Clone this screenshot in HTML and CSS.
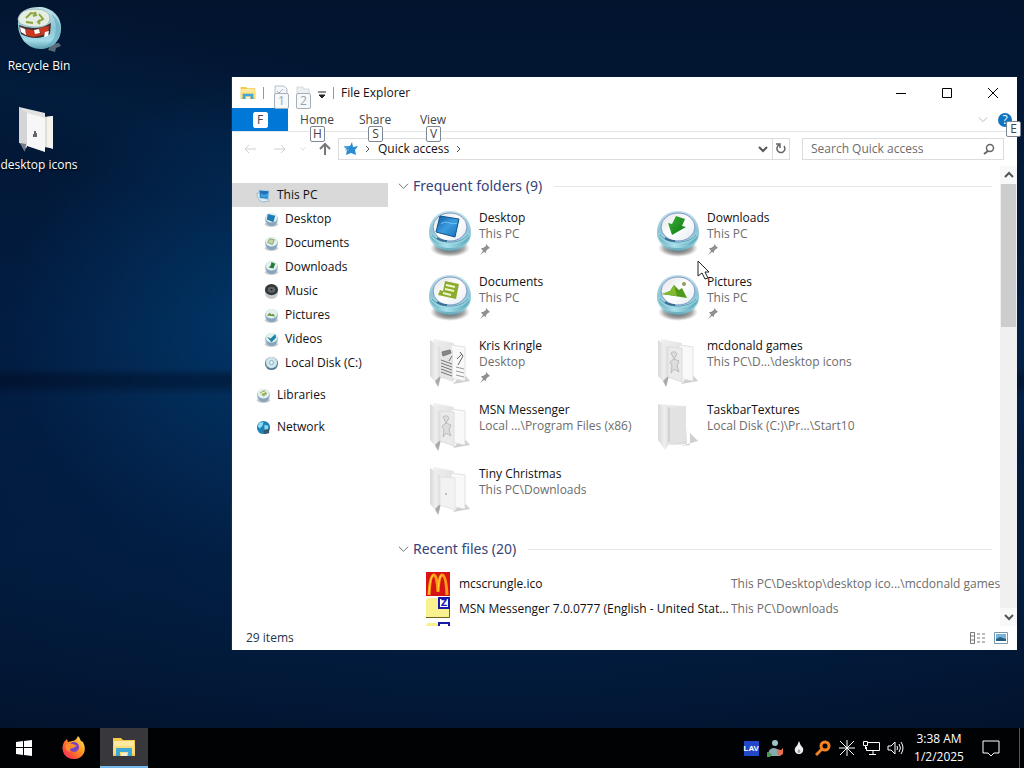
FILE: index.html
```html
<!DOCTYPE html>
<html lang="en">
<head>
<meta charset="utf-8">
<title>File Explorer</title>
<link rel="stylesheet" href="styles.css">
</head>
<body>
<svg class="defs" aria-hidden="true">
  <defs>
    <linearGradient id="orb-body" x1="0" y1="0" x2="0" y2="1"><stop offset="0" stop-color="#c3e4ec"/><stop offset=".5" stop-color="#8cc6d4"/><stop offset=".8" stop-color="#a2dbe6"/><stop offset="1" stop-color="#5f9fb2"/></linearGradient>
    <linearGradient id="orb-band" x1="0" y1="0" x2="1" y2="0"><stop offset="0" stop-color="#69adbf"/><stop offset=".4" stop-color="#a9e0ea"/><stop offset="1" stop-color="#5ba7bc"/></linearGradient>
    <linearGradient id="orb-top" x1="0" y1="0" x2="1" y2="1"><stop offset="0" stop-color="#dfe3e4"/><stop offset=".5" stop-color="#fff"/><stop offset="1" stop-color="#e3e9f2"/></linearGradient>
    <radialGradient id="orb-shadow"><stop offset="0" stop-color="#222" stop-opacity=".9"/><stop offset=".7" stop-color="#555" stop-opacity=".5"/><stop offset="1" stop-color="#888" stop-opacity="0"/></radialGradient>
    <linearGradient id="blue" x1="0" y1="0" x2="1" y2="1"><stop offset="0" stop-color="#125a9e"/><stop offset=".5" stop-color="#3a9cdf"/><stop offset="1" stop-color="#1b6fb5"/></linearGradient>
    <linearGradient id="green" x1="0" y1="0" x2="1" y2="1"><stop offset="0" stop-color="#3fae36"/><stop offset="1" stop-color="#0b7a15"/></linearGradient>
    <linearGradient id="flap" x1="0" y1="0" x2="1" y2="0"><stop offset="0" stop-color="#d9d9d9"/><stop offset=".6" stop-color="#efefef"/><stop offset="1" stop-color="#dcdcdc"/></linearGradient>
    <linearGradient id="back" x1="0" y1="0" x2="1" y2="1"><stop offset="0" stop-color="#f0f0f0"/><stop offset="1" stop-color="#dadada"/></linearGradient>
    <linearGradient id="fox" x1="1" y1="0" x2="0" y2="1"><stop offset="0" stop-color="#fff36b"/><stop offset=".4" stop-color="#ff9a1f"/><stop offset=".75" stop-color="#ff4a3d"/><stop offset="1" stop-color="#e52a7d"/></linearGradient>
  </defs>
  <symbol id="orb" viewBox="0 0 42 48">
    <ellipse cx="21" cy="38" rx="20" ry="9" fill="url(#orb-shadow)"/>
    <path d="M0 23C0 9 9 1 21 1s21 8 21 22c0 11-10 18-21 18S0 34 0 23z" fill="url(#orb-body)"/>
    <path d="M1 25c6 11 31 13 40 0-1 9-10 13-20 13S3 34 1 25z" fill="url(#orb-band)"/>
    <path d="M3 25c7 9 28 10 36 0" fill="none" stroke="#5a9fb3"/>
    <ellipse cx="21" cy="17" rx="17" ry="14" fill="url(#orb-top)" stroke="#8094c4"/>
    <path d="M8 28q4 3 10 3" fill="none" stroke="#3a6e94" stroke-width="2"/>
  </symbol>
  <symbol id="orb-desktop" viewBox="0 0 42 48"><use href="#orb"/><path d="M11 6l19 3-4 18-19-5z" fill="url(#blue)" stroke="#0e538e"/><path d="M12 14c6-5 10 2 16-1" fill="none" stroke="#73c6f5"/></symbol>
  <symbol id="orb-down" viewBox="0 0 42 48"><use href="#orb"/><path d="M19 6l9 3-3 7 4 1-14 8-4-12 4 1z" fill="url(#green)"/></symbol>
  <symbol id="orb-doc" viewBox="0 0 42 48"><use href="#orb"/><path d="M16 7l14 3-3 15-18-4 2-5 3 1z" fill="#8dac2d"/><path d="M17 11l9 2M16 15l9 2M14 19l8 2" stroke="#eff5cf" stroke-width="2"/></symbol>
  <symbol id="orb-pic" viewBox="0 0 42 48"><use href="#orb"/><path d="M5 20l8-3 4-6 5 5 3-2 5 10z" fill="#4f9a1c"/><path d="M5 20l8-3 4-6 3 11z" fill="#83b92f"/><circle cx="27" cy="10" r="2" fill="#8e9a62"/></symbol>

  <symbol id="folder" viewBox="0 0 42 52">
    <path d="M24 46l17-3-7-8z" fill="#bbb" opacity=".7"/>
    <path d="M4 1l21 4v38L4 38z" fill="url(#back)"/>
    <path d="M22 7l14 2v34l-14-3z" fill="#f9f9f9" stroke="#e2e2e2"/>
    <path d="M1 2l10 7v31l-1 8-9-10z" fill="url(#flap)"/>
    <path d="M10 39l2-1-3 11-3-6z" fill="#aaa"/>
  </symbol>
  <symbol id="folder-face" viewBox="0 0 42 52"><use href="#folder"/><path d="M11 9l14 1v34l-14-5z" fill="#eaeaea" stroke="#ddd"/><path d="M14 15q4-3 6 1l-3 5 5 2-2 5 2 6-5-3-3 4 1-7-2-4 4-3z" fill="#ddd" stroke="#bbb"/></symbol>
  <symbol id="folder-kris" viewBox="0 0 42 52"><use href="#folder"/><path d="M11 11l13 1v32l-13-5z" fill="#e4e4e4"/><path d="M13 14l8-2 1 3-8 3zM12 22l11 4M12 25l11 4M12 28l11 4M12 31l11 4M12 34l11 4M20 23l3-5" fill="#888" stroke="#777"/><path d="M31 14l3 4-5 9M28 21l5-5" fill="none" stroke="#666"/><path d="M27 29l8 2M27 33l8 2M27 37l8 2" fill="none" stroke="#999"/></symbol>
  <symbol id="folder-tiny" viewBox="0 0 42 52"><use href="#folder"/><path d="M11 11l15 1v32l-15-5z" fill="#f2f2f2" stroke="#e4e4e4"/><circle cx="17" cy="28" r="1" fill="#aaa"/></symbol>
  <symbol id="folder-flat" viewBox="0 0 42 52">
    <path d="M24 44l17-5-8-8v12z" fill="#bbb" opacity=".7"/>
    <path d="M1 2l27 2 2 38-17 1z" fill="url(#back)"/><path d="M12 6l17-2v35l-18 3z" fill="#e2e2e2"/><path d="M1 2l11 4v36l-4 6-7-10z" fill="url(#flap)"/><path d="M12 5v35" stroke="#c4c4c4"/>
  </symbol>

  <symbol id="pin" viewBox="0 0 12 12"><path d="M7 1l4 4-2 1-2 2v2L5 9l-4 3 3-4-2-3h2l3-2z" fill="#8c9093"/></symbol>
  <symbol id="s-orb" viewBox="0 0 16 16"><ellipse cx="8" cy="13" rx="7" ry="3" fill="#777" opacity=".4"/><circle cx="8" cy="8" r="7" fill="#a8ccd8"/><path d="M2 9q6 5 12 0-1 6-6 6T2 9z" fill="#8aa3bd"/><ellipse cx="8" cy="6" rx="6" ry="5" fill="#e6f0ee"/></symbol>
  <symbol id="s-desktop" viewBox="0 0 16 16"><use href="#s-orb"/><path d="M4 2l8 2-2 7-7-3z" fill="#1e7bb5"/></symbol>
  <symbol id="s-pc" viewBox="0 0 16 16"><path d="M1 5q0 8 6 10l7-1-2-4z" fill="#dcecf2" stroke="#9cb9c9"/><path d="M3 2l11 1-1 9-9-1z" fill="#1e70b8" stroke="#b7d3e6"/><path d="M5 5q4 4 8 0v5H5z" fill="#3ba1dc"/></symbol>
  <symbol id="s-doc" viewBox="0 0 16 16"><use href="#s-orb"/><path d="M6 3l5 1-2 5-5-2z" fill="#c5d7a8" stroke="#82a26c"/></symbol>
  <symbol id="s-down" viewBox="0 0 16 16"><use href="#s-orb"/><path d="M8 2l4 2-2 5-5-1 2-2z" fill="#237c3c"/></symbol>
  <symbol id="s-music" viewBox="0 0 16 16"><path d="M1 8h14q0 8-7 8T1 8z" fill="#c5cdd0"/><ellipse cx="8" cy="6" rx="7" ry="6" fill="#33393b"/><ellipse cx="8" cy="6" rx="4" ry="3" fill="#606668"/><circle cx="8" cy="6" r="1" fill="#222"/></symbol>
  <symbol id="s-pic" viewBox="0 0 16 16"><use href="#s-orb"/><path d="M3 8l3-3 2 2 2-1 2 3z" fill="#6a9a45"/></symbol>
  <symbol id="s-vid" viewBox="0 0 16 16"><use href="#s-orb"/><path d="M3 5l4 2 5-5 1 4-5 5z" fill="#1a87a6"/></symbol>
  <symbol id="s-disk" viewBox="0 0 16 16"><circle cx="8" cy="8" r="7" fill="#587f91"/><circle cx="8" cy="7" r="6" fill="#cde5eb"/><circle cx="8" cy="7" r="2" fill="#fff" stroke="#7ba4b4"/></symbol>
  <symbol id="s-lib" viewBox="0 0 16 16"><use href="#s-orb"/><path d="M4 5l5-3 3 4-4 3z" fill="#98b45d"/><path d="M5 6l5-2" stroke="#fff"/></symbol>
  <symbol id="s-net" viewBox="0 0 16 16"><circle cx="8" cy="8" r="7" fill="#1d82b8"/><path d="M3 3l5-1-1 4-3 3-2-2zM9 5l4 1v4l-3 2-1-3z" fill="#8cdcf0"/><path d="M8 11l6-2v5l-5 1z" fill="#3a566a"/></symbol>

  <symbol id="explorer" viewBox="0 0 24 20"><path d="M1 1h8l2 2h12v16H1z" fill="#f5c84c"/><path d="M2 4h20v6H2z" fill="#fde9a0"/><path d="M1 9h22v8H1z" fill="#fbdc7b"/><path d="M4 19v-7q0-1 1-1h14q1 0 1 1v7h-4v-4H8v4z" fill="#3ea9d6"/><path d="M9 16h6v3H9z" fill="#f5edd2"/></symbol>
  <symbol id="chev-down" viewBox="0 0 12 12"><path d="M1 3l5 5 5-5" fill="none" stroke="currentColor" stroke-width="1"/></symbol>
  <symbol id="chev-right" viewBox="0 0 8 8"><path d="M2 1l3 3-3 3" fill="none" stroke="currentColor"/></symbol>
  <symbol id="chev-bold" viewBox="0 0 10 10"><path d="M1 3l4 4 4-4" fill="none" stroke="currentColor" stroke-width="2"/></symbol>
  <symbol id="zip" viewBox="0 0 24 24"><path d="M0 3l2-2h9l3 3h10v17H0z" fill="#f9f08f"/><path d="M0 20.500h23.500V8" fill="none" stroke="#6d6420"/><path d="M13 1h10v10H13z" fill="#fff" stroke="#1a1aa8" stroke-width="2"/></symbol>
</svg>

<main class="desktop">
  <div class="shortcuts">
    <button class="shortcut">
      <svg class="shortcut-icon" viewBox="0 0 48 50" aria-hidden="true"><path d="M36 38l8-1 2 3-5 2-1 4-7-2z" fill="#6f7f88" opacity=".8"/><path d="M3 15C4 5 13 1 24 1s22 8 22 21-9 21-21 21S2 32 3 15z" fill="url(#orb-body)"/><path d="M36 8q8 10 3 24-5 8-14 10 16 0 20-13 2-14-9-21z" fill="#5fa8c0" opacity=".6"/><path d="M4 19q16 7 32-2l-1 11q-14 8-29 0z" fill="#4a3030"/><path d="M10 23l8 1 9 5-8 2-9-2zM24 22l10-2-1 8-7 1z" fill="#c93a22"/><path d="M5 21l5 2 1 6-5-3zM19 24l5-1 1 4-5 1zM30 26l4-1-1 5-4 1z" fill="#fff"/><path d="M3 13Q5 3 20 3q15 0 15 10-1 9-16 8Q3 20 3 13z" fill="#e5eee2" stroke="#99bdc1"/><path d="M11 12l5-5 5 1M24 8l4 5-5 3M18 17l-7-1M20 6l1 3-3 1M25 14l-2 2 2 2" fill="none" stroke="#8ba33b" stroke-width="2"/></svg>
      <span>Recycle Bin</span>
    </button>
    <button class="shortcut">
      <svg class="shortcut-icon" viewBox="0 0 48 50" aria-hidden="true"><path d="M4 2l26 6v34L4 38z" fill="#e2e2e2"/><path d="M4 2l8 6v34l-3 3-5-9z" fill="#d5d5d8"/><path d="M5 38l6 1-1 8z" fill="#717987"/><path d="M28 12l10-1v32l-10-1z" fill="#e2dfd8"/><path d="M32 12l6-1v33l-6-2z" fill="#f4f2ec"/><path d="M12 8l18 5v34l-18-6z" fill="#f7f7f7"/><path d="M19 26h2v2h1v4h-4v-3h1z" fill="#666"/></svg>
      <span>desktop icons</span>
    </button>
  </div>

  <section class="window" aria-label="File Explorer">
    <header class="titlebar">
      <svg class="app-icon" aria-hidden="true"><use href="#explorer"/></svg>
      <span class="sep"></span>
      <button class="quick" aria-label="Properties"><svg width="14" height="16" viewBox="0 0 14 16"><path d="M1 1h9l3 3v11H1z" fill="#f5f8fb" stroke="#b4bec9"/><path d="M3 6l2 2 4-4" fill="none" stroke="#a5b3c4"/></svg><kbd class="tip">1</kbd></button>
      <button class="quick" aria-label="New folder"><svg width="14" height="16" viewBox="0 0 14 16"><path d="M1 2h6l1 2h5v11H1z" fill="#eceff2" stroke="#d4d8dc"/></svg><kbd class="tip">2</kbd></button>
      <button class="customize" aria-label="Customize toolbar"><svg width="8" height="8" viewBox="0 0 8 8"><path d="M0 1h8M1 4h6L4 7z" stroke="#222" fill="#222"/></svg></button>
      <span class="sep"></span>
      <h1 class="title">File Explorer</h1>
      <div class="caption">
        <button aria-label="Minimize"><svg width="10" height="10"><path d="M0 5.500h10" stroke="#000"/></svg></button>
        <button aria-label="Maximize"><svg width="10" height="10"><path d="M.5.5h9v9h-9z" stroke="#000" fill="none"/></svg></button>
        <button aria-label="Close"><svg width="12" height="12"><path d="M1 1l10 10M11 1L1 11" stroke="#000"/></svg></button>
      </div>
    </header>

    <nav class="tabs" aria-label="Ribbon">
      <button class="file-tab" aria-label="File"><kbd class="tip in-tab">F</kbd></button>
      <button class="tab">Home<kbd class="tip">H</kbd></button>
      <button class="tab">Share<kbd class="tip">S</kbd></button>
      <button class="tab">View<kbd class="tip">V</kbd></button>
      <div class="ribbon-end">
        <button class="plain faint" aria-label="Expand ribbon"><svg width="10" height="10"><use href="#chev-down"/></svg></button>
        <button class="help" aria-label="Help">?<kbd class="tip">E</kbd></button>
      </div>
    </nav>

    <div class="address-row">
      <button class="plain arrow" aria-label="Back"><svg width="12" height="10" viewBox="0 0 12 10"><path d="M12 5H1M5 1L1 5l4 4" fill="none" stroke="#d0d0d0" stroke-width="1"/></svg></button>
      <button class="plain arrow" aria-label="Forward"><svg width="12" height="10" viewBox="0 0 12 10"><path d="M0 5h11M7 1l4 4-4 4" fill="none" stroke="#d0d0d0"/></svg></button>
      <button class="plain history" aria-label="Recent locations"><svg width="6" height="6"><use href="#chev-down"/></svg></button>
      <button class="plain up" aria-label="Up"><svg width="12" height="14" viewBox="0 0 12 14"><path d="M6 13V2M1 7l5-5 5 5" fill="none" stroke="#777" stroke-width="2"/></svg></button>
      <div class="address">
        <svg width="14" height="14" viewBox="0 0 14 14" aria-hidden="true"><path d="M8 0l1 5 5-1-3 4 1 5-5-2-5 2 1-5-3-4 6 0z" fill="#2b8bd0"/><path d="M0 5h5M1 8h4" stroke="#6cb8ea"/></svg>
        <svg class="crumb" aria-hidden="true"><use href="#chev-right"/></svg>
        <a class="place" href="#quick">Quick access</a>
        <svg class="crumb" aria-hidden="true"><use href="#chev-right"/></svg>
        <button class="plain drop" aria-label="Previous locations"><svg width="10" height="10"><use href="#chev-bold"/></svg></button>
        <button class="plain refresh" aria-label="Refresh"><svg width="12" height="12" viewBox="0 0 12 12"><path d="M4 2a4 4 0 1 0 5 1M1 1h4v4" fill="none" stroke="#666" stroke-width="1.500"/></svg></button>
      </div>
      <label class="search"><input type="text" placeholder="Search Quick access" aria-label="Search Quick access"><svg width="12" height="12" viewBox="0 0 12 12" aria-hidden="true"><circle cx="7" cy="5" r="3.500" fill="none" stroke="#666" stroke-width="1.500"/><path d="M5 8l-4 3" stroke="#666" stroke-width="2"/></svg></label>
    </div>

    <div class="body">
      <nav class="tree" aria-label="Folders">
        <a class="node selected" href="#pc"><svg><use href="#s-pc"/></svg>This PC</a>
        <a class="node child" href="#desktop"><svg><use href="#s-desktop"/></svg>Desktop</a>
        <a class="node child" href="#documents"><svg><use href="#s-doc"/></svg>Documents</a>
        <a class="node child" href="#downloads"><svg><use href="#s-down"/></svg>Downloads</a>
        <a class="node child" href="#music"><svg><use href="#s-music"/></svg>Music</a>
        <a class="node child" href="#pictures"><svg><use href="#s-pic"/></svg>Pictures</a>
        <a class="node child" href="#videos"><svg><use href="#s-vid"/></svg>Videos</a>
        <a class="node child" href="#c"><svg><use href="#s-disk"/></svg>Local Disk (C:)</a>
        <a class="node apart" href="#libraries"><svg><use href="#s-lib"/></svg>Libraries</a>
        <a class="node apart" href="#network"><svg><use href="#s-net"/></svg>Network</a>
      </nav>

      <div class="content">
        <h2 class="group"><svg><use href="#chev-down"/></svg>Frequent folders (9)</h2>
        <ul class="tiles">
          <li class="tile"><svg class="orb"><use href="#orb-desktop"/></svg><div><b>Desktop</b><span>This PC</span><svg class="pin"><use href="#pin"/></svg></div></li>
          <li class="tile"><svg class="orb"><use href="#orb-down"/></svg><div><b>Downloads</b><span>This PC</span><svg class="pin"><use href="#pin"/></svg></div></li>
          <li class="tile"><svg class="orb"><use href="#orb-doc"/></svg><div><b>Documents</b><span>This PC</span><svg class="pin"><use href="#pin"/></svg></div></li>
          <li class="tile"><svg class="orb"><use href="#orb-pic"/></svg><div><b>Pictures</b><span>This PC</span><svg class="pin"><use href="#pin"/></svg></div></li>
          <li class="tile"><svg class="folder"><use href="#folder-kris"/></svg><div><b>Kris Kringle</b><span>Desktop</span><svg class="pin"><use href="#pin"/></svg></div></li>
          <li class="tile"><svg class="folder"><use href="#folder-face"/></svg><div><b>mcdonald games</b><span>This PC\D...\desktop icons</span></div></li>
          <li class="tile"><svg class="folder"><use href="#folder-face"/></svg><div><b>MSN Messenger</b><span>Local ...\Program Files (x86)</span></div></li>
          <li class="tile"><svg class="folder"><use href="#folder-flat"/></svg><div><b>TaskbarTextures</b><span>Local Disk (C:)\Pr...\Start10</span></div></li>
          <li class="tile"><svg class="folder"><use href="#folder-tiny"/></svg><div><b>Tiny Christmas</b><span>This PC\Downloads</span></div></li>
        </ul>
        <h2 class="group"><svg><use href="#chev-down"/></svg>Recent files (20)</h2>
        <ul class="files">
          <li class="file"><svg viewBox="0 0 24 24"><path d="M0 0h24v24H0z" fill="#d81313"/><path d="M3 23Q4 3 8 3q3 0 4 17 1-17 4-17 4 0 5 20" fill="none" stroke="#ff9c13" stroke-width="3"/><path d="M3 22Q4 3 8 3M12 19q1-16 4-16" fill="none" stroke="#ffd83a"/></svg><b>mcscrungle.ico</b><span>This PC\Desktop\desktop ico...\mcdonald games</span></li>
          <li class="file"><svg viewBox="0 0 24 24"><use href="#zip"/><text class="zip-mark" x="18" y="9" text-anchor="middle">Z</text></svg><b>MSN Messenger 7.0.0777 (English - United Stat...</b><span>This PC\Downloads</span></li>
          <li class="file"><svg><use href="#zip"/></svg></li>
        </ul>
      </div>

      <div class="scrollbar">
        <button class="plain" aria-label="Scroll up"><svg class="flip" width="10" height="10"><use href="#chev-bold"/></svg></button>
        <div class="thumb"></div>
        <button class="plain" aria-label="Scroll down"><svg width="10" height="10"><use href="#chev-bold"/></svg></button>
      </div>
    </div>

    <footer class="status">
      <span>29 items</span>
      <button class="plain" aria-label="Details view"><svg width="16" height="12" viewBox="0 0 16 12"><path d="M.5.5h4v11h-4zM1 4h4M1 8h4M7 2h3M12 2h3M7 6h3M12 6h3M7 10h3M12 10h3" fill="none" stroke="#777"/></svg></button>
      <button class="plain" aria-label="Large icons view"><svg width="14" height="12" viewBox="0 0 14 12"><path d="M.5.5h13v11H.5z" fill="#fff" stroke="#7799ad"/><path d="M2 2h10v7H2z" fill="#79b4d8"/><path d="M2 7l4-2 6 2v2H2z" fill="#235f80"/></svg></button>
    </footer>
  </section>

  <svg class="cursor" viewBox="0 0 13 20" aria-hidden="true"><path d="M1 1v15l4-3 3 6 3-1-3-6h4z" fill="#fff" stroke="#222"/></svg>
</main>

<footer class="taskbar">
  <button class="task" aria-label="Start"><svg width="16" height="16" viewBox="0 0 16 16"><path d="M0 2l7-1v6H0zM8 1l8-1v7H8zM0 8h7v7l-7-1zM8 8h8v8l-8-1z" fill="#fff"/></svg></button>
  <button class="task" aria-label="Firefox"><svg width="24" height="24" viewBox="0 0 24 24"><path d="M2 6l3-3 1 3 4-1q4 0 6-5 2 2 3 5l2 1q3 6 1 11-3 6-10 6T2 18Q-1 12 2 6z" fill="url(#fox)"/><circle cx="12" cy="11" r="5" fill="#7542c9"/><path d="M4 8q4-1 7 0l4 2-4 2q-4 0-3 4-6-2-4-8z" fill="#ff8b2c"/></svg></button>
  <button class="task active" aria-label="File Explorer"><svg width="24" height="20"><use href="#explorer"/></svg></button>
  <div class="tray">
    <button class="tray-item" aria-label="LAV filters"><span class="lav">LAV</span></button>
    <button class="tray-item" aria-label="Messenger"><svg width="18" height="18" viewBox="0 0 18 18"><circle cx="9" cy="4" r="3" fill="#9cc4c8"/><path d="M2 17q0-8 6-8 5 0 6 8z" fill="#86abb1"/><path d="M1 13l5 2-2 3H1z" fill="#4e9a50"/><path d="M11 10l4 1 2-2v6l-3 2-3-2z" fill="#e3714f"/></svg></button>
    <button class="tray-item" aria-label="Rainmeter"><svg width="12" height="16" viewBox="0 0 12 16"><path d="M6 1q1 4 4 7c2 8-10 8-8 0q3-3 4-7z" fill="#eee"/><path d="M6 9q3 3 0 4-3-1 0-4z" fill="#9ba4ad"/></svg></button>
    <button class="tray-item" aria-label="Search tool"><svg width="16" height="16" viewBox="0 0 16 16"><circle cx="10" cy="6" r="4" fill="none" stroke="#f58220" stroke-width="3"/><path d="M7 9l-6 6" stroke="#f58220" stroke-width="3"/></svg></button>
    <button class="tray-item" aria-label="Starburst"><svg width="16" height="16" viewBox="0 0 16 16"><path d="M8 0v16M0 8h16M1 1l14 14M15 1L1 15" stroke="#fff"/></svg></button>
    <button class="tray-item" aria-label="Network"><svg width="17" height="16" viewBox="0 0 17 16"><path d="M5 2.500h11.500v8H3.500V7M10 11v3M6 14.500h7M.5 1.500h4v4h-4zM2.500 6v3" fill="none" stroke="#fff"/></svg></button>
    <button class="tray-item" aria-label="Volume"><svg width="17" height="14" viewBox="0 0 17 14"><path d="M1 5h3l4-4v12L4 9H1zM10 5q1 2 0 4M12 3q3 4 0 8M14 1q4 6 0 12" fill="none" stroke="#fff"/></svg></button>
    <button class="clock"><time>3:38 AM</time><time>1/2/2025</time></button>
    <button class="notify" aria-label="Notifications"><svg width="18" height="17" viewBox="0 0 18 17"><path d="M1 1h16v12h-5l-3 3-3-3H1z" fill="none" stroke="#fff"/></svg></button>
    <span class="peek"></span>
  </div>
</footer>
</body>
</html>
```
FILE: styles.css
```css
* { box-sizing: border-box; }
body {
  margin: 0;
  height: 100vh;
  display: flex;
  flex-direction: column;
  overflow: hidden;
  font: 12px/16px "Open Sans", "Noto Sans", sans-serif;
  color: #111;
  background: #020b1e;
}
button { border: 0; padding: 0; margin: 0; background: none; font: inherit; color: inherit; }
a { color: inherit; text-decoration: none; }
ul { list-style: none; margin: 0; padding: 0; }
b { font-weight: 400; }
svg { display: block; flex: none; }
.defs { position: absolute; width: 0; height: 0; }
.plain { display: grid; place-items: center; color: #555; }

.desktop {
  position: relative;
  flex: 1;
  background:
    linear-gradient(to bottom, transparent 368px, rgba(0, 8, 28, .4) 377px, rgba(0, 8, 28, .4) 384px, transparent 396px),
    linear-gradient(16deg, transparent 57%, rgba(0, 60, 115, .15) 63%, transparent 74%),
    radial-gradient(ellipse 250px 240px at 260px 320px, rgba(0, 78, 140, .5), transparent),
    radial-gradient(ellipse 700px 280px at 500px 540px, rgba(2, 46, 94, .4), transparent),
    linear-gradient(to bottom, #02142e, #021d42 45%, #02193a 80%, #02132d);
}
.shortcuts { display: flex; flex-direction: column; width: 78px; gap: 10px; padding-top: 6px; }
.shortcut { display: flex; flex-direction: column; align-items: center; color: #fff; text-shadow: 0 1px 2px #000; height: 89px; white-space: nowrap; }
.shortcut-icon { width: 48px; height: 50px; margin-bottom: 2px; }

.window {
  position: absolute;
  inset: 77px 7px 78px 231px;
  display: flex;
  flex-direction: column;
  background: #fff;
  border-left: 1px solid #1b2c42;
}
.titlebar { display: flex; align-items: center; height: 31px; padding: 0 1px 0 8px; }
.app-icon { width: 16px; height: 14px; }
.sep { width: 1px; height: 12px; background: #999; margin: 0 10px 0 7px; }
.quick { position: relative; width: 14px; margin-right: 8px; }
.customize { width: 8px; margin: 4px 0 0; }
.title { font-size: 12px; font-weight: 400; line-height: 16px; margin: 0; }
.titlebar .sep:nth-of-type(2) { margin: 0 7px; }
.caption { display: flex; margin-left: auto; }
.caption button { width: 46px; height: 31px; display: grid; place-items: center; }

.tip {
  position: absolute;
  top: 14px;
  left: 50%;
  margin-left: -7px;
  width: 15px;
  height: 16px;
  border: 1px solid #7d8894;
  border-radius: 2px;
  background: #fff;
  color: #444;
  font: 12px/14px "Open Sans", "Noto Sans", sans-serif;
  text-align: center;
}
.quick .tip { top: 8px; color: #9aa3ac; border-color: #a6b0bb; background: #f6f8fa; }
.tip.in-tab { position: static; margin: 0; border-color: #fff; }

.tabs { display: flex; align-items: center; height: 24px; border-bottom: 1px solid #e6e6e6; }
.file-tab { width: 56px; height: 23px; background: #0078d7; display: grid; place-items: center; }
.tab { position: relative; width: 58px; color: #444; }
.tab .tip { top: 14px; }
.ribbon-end { display: flex; gap: 10px; margin-left: auto; padding-right: 5px; }
.faint { color: #aaa; }
.help { position: relative; width: 14px; height: 14px; border-radius: 50%; background: #1274c0; color: #fff; line-height: 14px; }
.help .tip { top: 8px; left: 15px; }

.address-row { display: flex; align-items: center; height: 34px; padding: 0 13px 0 12px; }
.arrow { width: 12px; margin-right: 18px; }
.history { width: 6px; color: #bbb; margin: 0 13px 0 -4px; }
.up { width: 12px; margin-right: 7px; }
.address { flex: 1; display: flex; align-items: center; height: 22px; border: 1px solid #dcdcdc; padding-left: 5px; margin-right: 12px; }
.crumb { width: 8px; height: 8px; margin: 0 6px; color: #555; }
.drop { margin-left: auto; width: 18px; }
.refresh { width: 17px; height: 20px; border-left: 1px solid #dcdcdc; }
.search { display: flex; align-items: center; width: 202px; height: 22px; border: 1px solid #dcdcdc; padding: 0 8px; }
.search input { flex: 1; min-width: 0; border: 0; padding: 0; outline: 0; font: inherit; background: none; }
.search input::placeholder { color: #6d6d6d; opacity: 1; }

.body { flex: 1; min-height: 0; display: flex; }
.tree { width: 156px; padding-top: 17px; }
.node { display: flex; align-items: center; height: 24px; gap: 6px; padding-left: 24px; }
.node svg { width: 15px; height: 15px; }
.child { padding-left: 32px; }
.selected { background: #d9d9d9; }
.apart { margin-top: 8px; }

.content { flex: 1; min-width: 0; overflow: hidden; padding: 8px 0 0 10px; }
.group { display: flex; align-items: center; gap: 4px; height: 24px; margin: 0 8px 0 0; font: 14px/20px "Noto Sans", "Open Sans", sans-serif; color: #35437a; white-space: nowrap; }
.group svg { width: 11px; height: 11px; color: #666; }
.group::after { content: ""; flex: 1; height: 1px; margin-left: 8px; background: #e6e6e6; }
.tiles { display: grid; grid-template-columns: repeat(2, 228px); grid-auto-rows: 64px; padding: 12px 0 7px 31px; }
.tile { display: flex; gap: 8px; line-height: 16px; white-space: nowrap; }
.orb { width: 42px; height: 48px; }
.folder { width: 42px; height: 52px; }
.tile b, .tile span { display: block; }
.tile span, .file span { color: #6d6d6d; }
.pin { width: 12px; height: 12px; margin-top: 1px; }
.files { padding: 10px 0 0 28px; }
.file { display: grid; grid-template-columns: 24px 263px 1fr; column-gap: 9px; align-items: center; height: 25px; white-space: nowrap; }
.file svg { width: 24px; height: 24px; }
.zip-mark { font: bold 9px "DejaVu Sans", sans-serif; fill: #1a1ab8; }

.scrollbar { display: flex; flex-direction: column; width: 17px; background: #f0f0f0; }
.scrollbar button { height: 18px; background: #f8f8f8; }
.scrollbar button:last-child { margin-top: auto; }
.flip { transform: rotate(180deg); }
.thumb { height: 31%; background: #cdcdcd; margin: 0 1px; }

.status { display: flex; align-items: center; height: 24px; padding: 0 9px 0 14px; gap: 8px; color: #26334a; }
.status span { margin-right: auto; }

.cursor { position: absolute; left: 697px; top: 183px; width: 13px; height: 20px; }
.desktop .cursor { top: 260px; }

.taskbar { display: flex; height: 40px; background: #010204; color: #fff; }
.task { width: 48px; display: grid; place-items: center; }
.task:nth-child(2) { margin: 0 2px; }
.active { background: #38383c; border-bottom: 2px solid #76b9ed; }
.tray { display: flex; align-items: center; margin-left: auto; }
.tray-item { width: 24px; height: 40px; display: grid; place-items: center; }
.lav { width: 15px; height: 15px; background: #2148c8; font: bold 8px/15px "Liberation Sans", sans-serif; }
.clock { width: 64px; line-height: 18px; white-space: nowrap; }
.clock time { display: block; }
.notify { width: 40px; height: 40px; display: grid; place-items: center; }
.peek { width: 5px; height: 40px; border-left: 1px solid #555; margin-left: 8px; }
```
